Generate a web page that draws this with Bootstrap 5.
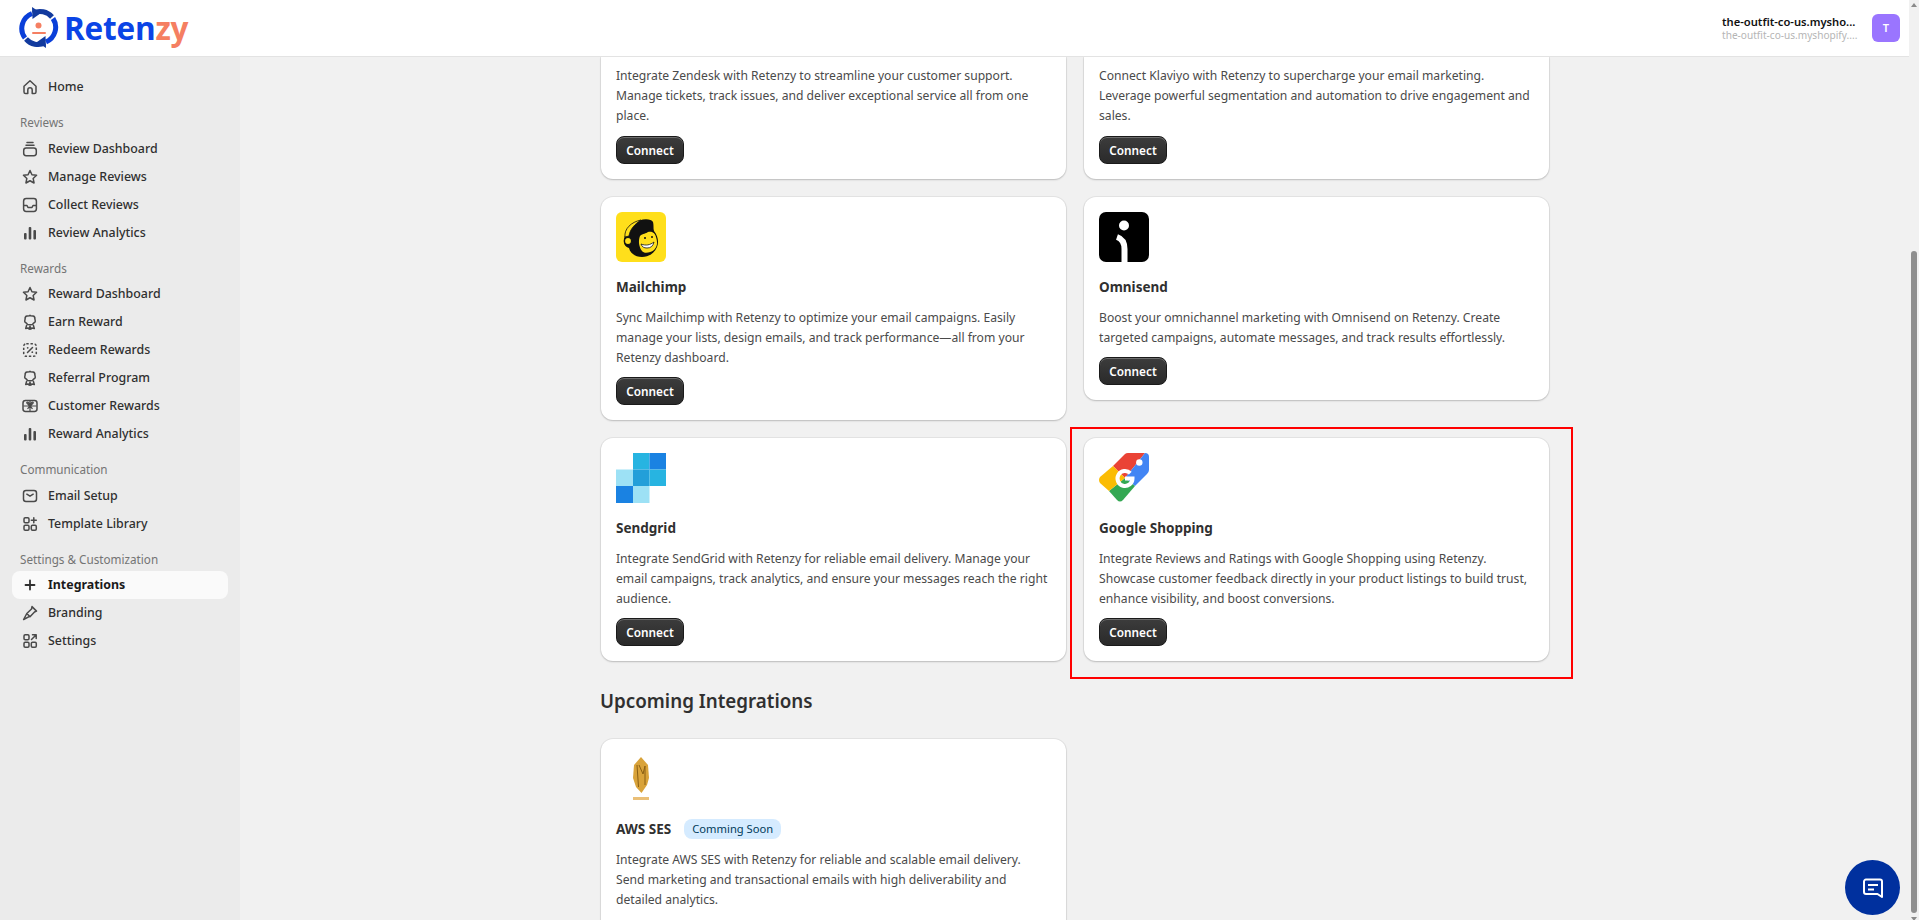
<!DOCTYPE html>
<html lang="en">
<head>
<meta charset="utf-8">
<title>Retenzy Integrations</title>
<link href="https://cdn.jsdelivr.net/npm/bootstrap@5.3.0/dist/css/bootstrap.min.css" rel="stylesheet">
<style>
html,body{height:100%;overflow:hidden;}
body{background:#f1f1f1;font-family:"Noto Sans","Open Sans",sans-serif;color:#303030;font-size:13px;line-height:20px;}
.app-shell{height:920px;}
.app-left{min-width:0;}
.app-body{min-height:0;}
.topbar{height:57px;flex:none;background:#fff;border-bottom:1px solid #e3e3e3;padding:0 9px 0 19px;}
.brand-name{font-family:"Open Sans",sans-serif;font-weight:700;font-size:31.5px;line-height:40px;color:#0b44e6;letter-spacing:-.2px;margin-left:5px;margin-top:-1px;}
.brand-name span{color:#f57f62;}
.shop-box{width:141px;margin-right:9px;}
.shop-name{font-size:11.2px;font-weight:600;color:#111;line-height:14px;white-space:nowrap;}
.shop-domain{font-size:10.1px;color:#b5b5b5;line-height:13px;white-space:nowrap;}
.avatar-box{width:28px;height:28px;border-radius:6px;background:#9a75ff;color:#fff;font-size:11px;font-weight:600;}
.side-panel{width:240px;background:#ebebeb;padding:16px 12px 0;flex:none;}
.side-label{font-size:11.7px;line-height:19px;color:#747474;margin-top:12px;padding-left:8px;height:21.5px;white-space:nowrap;}
.side-link{height:28px;padding-left:8px;gap:8px;color:#303030;font-size:12.4px;font-weight:500;border-radius:8px;text-decoration:none;}
.side-link svg{width:20px;height:20px;flex:none;}
.side-link.is-current{background:#fafafa;font-weight:700;color:#1a1a1a;}
.main-area{min-width:0;overflow:hidden;position:relative;}
.content-wrap{width:948px;margin-left:361px;}
.card-grid{display:grid;grid-template-columns:465px 465px;column-gap:18px;row-gap:18px;align-items:start;}
.int-card{border:0;border-radius:12px;background:#fff;padding:15px;box-shadow:0 0 0 1px rgba(0,0,0,.05),0 1px 2px rgba(0,0,0,.18);position:relative;}
.int-card.cut-top{border-top-left-radius:0;border-top-right-radius:0;padding-top:9px;}
.int-logo{width:50px;height:50px;display:block;flex:none;margin-bottom:15px;}
.int-title{font-size:13.5px;line-height:20px;font-weight:700;color:#303030;margin:0 0 11px;}
.int-text{font-size:12.15px;line-height:20px;color:#4a4a4a;margin:0 0 9px;}
.cut-top .int-text{margin-bottom:10px;}
.connect-btn{height:28px;width:68px;padding:0;font-size:11.8px;font-weight:600;line-height:26px;color:#fff;border-radius:8px;border:1px solid #1a1a1a;background:linear-gradient(#3c3c3c,#2a2a2a);box-shadow:inset 0 1px 0 rgba(255,255,255,.25);display:block;}
.soon-pill{background:#d5ebff;color:#003a5a;font-size:11.2px;font-weight:400;line-height:20px;border-radius:8px;padding:0 8px;margin-left:13px;}
.section-head{font-size:18.8px;line-height:28px;font-weight:600;color:#303030;margin:26px 0 24px -1px;}
.focus-frame{position:absolute;left:-14px;right:-24px;top:-11px;bottom:-18px;border:2px solid #f00;pointer-events:none;}
.scroll-col{width:10px;background:#f1f1f1;flex:none;}
.scroll-thumb{width:6px;margin:244px 0 0 2px;height:662px;background:#8f8f8f;border-radius:3px;}
.scroll-arrow{width:0;height:0;margin:3px auto 0;border-left:3px solid transparent;border-right:3px solid transparent;border-bottom:4px solid #8a8a8a;}
.scroll-arrow.down{border-bottom:0;border-top:4px solid #8a8a8a;margin-top:4px;}
.chat-fab{position:fixed;left:1845px;top:860px;width:55px;height:55px;border-radius:50%;background:#00309e;border:0;padding:0;}
</style>
</head>
<body>
<svg width="0" height="0" class="position-absolute">
<defs>
<g id="ic-home" fill="none" stroke="#4a4a4a" stroke-width="1.5" stroke-linejoin="round"><path d="M4 9.2 10 3.8l6 5.4V15a1.6 1.6 0 0 1-1.6 1.6H12.2V13a2.2 2.2 0 0 0-4.4 0v3.600H5.600A1.600 1.600 0 0 1 4 15z"/></g>
<g id="ic-stack" fill="none" stroke="#4a4a4a" stroke-width="1.5" stroke-linecap="round"><rect x="3.700" y="9" width="12.600" height="7.700" rx="2.400"/><path d="M6 6.200h8M7 3.600h6"/></g>
<g id="ic-star" fill="none" stroke="#4a4a4a" stroke-width="1.500" stroke-linejoin="round"><path d="M10 3.500l1.950 4.200 4.600.6-3.400 3.150.9 4.550L10 13.750 5.950 16l.9-4.550L3.450 8.300l4.600-.6z"/></g>
<g id="ic-inbox" fill="none" stroke="#4a4a4a" stroke-width="1.500" stroke-linejoin="round"><rect x="3.600" y="3.600" width="12.800" height="12.800" rx="2.600"/><path d="M3.600 10.500H7l1 2h4l1-2h3.400"/></g>
<g id="ic-bars" fill="#4a4a4a"><rect x="4" y="10" width="2.600" height="6.500" rx="1"/><rect x="8.700" y="4" width="2.600" height="12.500" rx="1"/><rect x="13.400" y="7" width="2.600" height="9.500" rx="1"/></g>
<g id="ic-award" fill="none" stroke="#4a4a4a" stroke-width="1.500" stroke-linejoin="round"><path d="M10 3.200c1 .9 1.800.7 3 .8 1.600.2 2 1.800 1.900 3 0 1 .9 1.700.1 3-.7 1-1.700 1-2.300 2.200-.8.700-1.800.6-2.700.6s-1.900.1-2.700-.6C6.700 11 5.700 11 5 10c-.8-1.300.1-2 .1-3-.1-1.200.3-2.800 1.900-3 1.200-.1 2 .1 3-.8z"/><path d="M6.800 12.800 5.700 16.500l2.300-.6 1.300 1.300.7-3 .7 3 1.300-1.300 2.300.6-1.100-3.700"/></g>
<g id="ic-redeem" fill="none" stroke="#4a4a4a" stroke-width="1.500"><rect x="3.700" y="3.700" width="12.600" height="12.600" rx="2.600" stroke-dasharray="2.400 1.800"/><path d="M12.500 7.500l-5 5" stroke-linecap="round"/><circle cx="7.700" cy="7.800" r=".9" fill="#4a4a4a" stroke="none"/><circle cx="12.300" cy="12.200" r=".9" fill="#4a4a4a" stroke="none"/></g>
<g id="ic-gift" fill="none" stroke="#4a4a4a" stroke-width="1.500"><rect x="3" y="4.500" width="14" height="11" rx="2.400"/><path d="M10 4.500v11M3.500 10h13M10 10 7 7.200c-1-.8.800-1.600 1.500-.6zM10 10l3-2.800c1-.8-.8-1.600-1.500-.6zM10 10l-2.500 2.800M10 10l2.500 2.800" stroke-width="1.200"/></g>
<g id="ic-mail" fill="none" stroke="#4a4a4a" stroke-width="1.500" stroke-linecap="round"><rect x="3.500" y="4.500" width="13" height="11" rx="2.500"/><path d="M6.800 8.200 10 10.200l3.200-2"/></g>
<g id="ic-grid-plus" fill="none" stroke="#4a4a4a" stroke-width="1.500" stroke-linecap="round"><rect x="4" y="3.700" width="5" height="5" rx="1.200"/><rect x="4" y="11.300" width="5" height="5" rx="1.200"/><rect x="11.300" y="11.300" width="5" height="5" rx="1.200"/><path d="M13.800 3.700v5M11.300 6.200h5"/></g>
<g id="ic-plus" stroke="#303030" stroke-width="1.800" stroke-linecap="round"><path d="M10 5.500v9M5.500 10h9"/></g>
<g id="ic-brush" fill="none" stroke="#4a4a4a" stroke-width="1.500" stroke-linejoin="round"><path d="M12 3.600l4.500 4.500-2 .9-4.500 4.700-3.200-3.200 4.700-4.500z"/><path d="M6.800 10.500 3.600 16.500l6-3.200"/></g>
<g id="ic-grid-arrow" fill="none" stroke="#4a4a4a" stroke-width="1.500" stroke-linecap="round" stroke-linejoin="round"><rect x="4" y="3.700" width="5" height="5" rx="1.200"/><rect x="4" y="11.300" width="5" height="5" rx="1.200"/><rect x="11.300" y="11.300" width="5" height="5" rx="1.200"/><path d="M11.500 8.500 16 4M12.500 3.700h3.700v3.700"/></g>
</defs>
</svg>

<div class="app-shell d-flex">
  <div class="app-left flex-grow-1 d-flex flex-column">
    <header class="topbar d-flex align-items-center justify-content-between">
      <div class="d-flex align-items-center">
        <svg width="40" height="42" viewBox="0 0 40 42" aria-hidden="true">
          <path d="M6 31A16 16 0 0 1 13 6.500" fill="none" stroke="#0a3fd9" stroke-width="5"/>
          <path d="M34 11.500A16 16 0 0 1 27 35" fill="none" stroke="#0a3fd9" stroke-width="5"/>
          <path d="M14 6A16 16 0 0 1 33 10" fill="none" stroke="#123a9e" stroke-width="5"/>
          <path d="M26 36A16 16 0 0 1 7 32" fill="none" stroke="#123a9e" stroke-width="5"/>
          <path d="M14 0l.5 12L23 6z" fill="#123a9e" transform="translate(-1 0)"/>
          <path d="M26 42l-.5-12L17 36z" fill="#123a9e" transform="translate(1 -1)"/>
          <circle cx="19.500" cy="18.500" r="3" fill="#f57f62"/>
          <rect x="13" y="25" width="14" height="2" rx="1" fill="#f57f62"/>
        </svg>
        <div class="brand-name">Reten<span>zy</span></div>
      </div>
      <div class="d-flex align-items-center">
        <div class="shop-box">
          <div class="shop-name">the-outfit-co-us.mysho...</div>
          <div class="shop-domain">the-outfit-co-us.myshopify....</div>
        </div>
        <div class="avatar-box d-flex align-items-center justify-content-center">T</div>
      </div>
    </header>

    <div class="app-body d-flex flex-grow-1">
      <nav class="side-panel">
        <a class="side-link d-flex align-items-center" href="#"><svg viewBox="0 0 20 20"><use href="#ic-home"/></svg>Home</a>
        <div class="side-label">Reviews</div>
        <a class="side-link d-flex align-items-center" href="#"><svg viewBox="0 0 20 20"><use href="#ic-stack"/></svg>Review Dashboard</a>
        <a class="side-link d-flex align-items-center" href="#"><svg viewBox="0 0 20 20"><use href="#ic-star"/></svg>Manage Reviews</a>
        <a class="side-link d-flex align-items-center" href="#"><svg viewBox="0 0 20 20"><use href="#ic-inbox"/></svg>Collect Reviews</a>
        <a class="side-link d-flex align-items-center" href="#"><svg viewBox="0 0 20 20"><use href="#ic-bars"/></svg>Review Analytics</a>
        <div class="side-label">Rewards</div>
        <a class="side-link d-flex align-items-center" href="#"><svg viewBox="0 0 20 20"><use href="#ic-star"/></svg>Reward Dashboard</a>
        <a class="side-link d-flex align-items-center" href="#"><svg viewBox="0 0 20 20"><use href="#ic-award"/></svg>Earn Reward</a>
        <a class="side-link d-flex align-items-center" href="#"><svg viewBox="0 0 20 20"><use href="#ic-redeem"/></svg>Redeem Rewards</a>
        <a class="side-link d-flex align-items-center" href="#"><svg viewBox="0 0 20 20"><use href="#ic-award"/></svg>Referral Program</a>
        <a class="side-link d-flex align-items-center" href="#"><svg viewBox="0 0 20 20"><use href="#ic-gift"/></svg>Customer Rewards</a>
        <a class="side-link d-flex align-items-center" href="#"><svg viewBox="0 0 20 20"><use href="#ic-bars"/></svg>Reward Analytics</a>
        <div class="side-label">Communication</div>
        <a class="side-link d-flex align-items-center" href="#"><svg viewBox="0 0 20 20"><use href="#ic-mail"/></svg>Email Setup</a>
        <a class="side-link d-flex align-items-center" href="#"><svg viewBox="0 0 20 20"><use href="#ic-grid-plus"/></svg>Template Library</a>
        <div class="side-label">Settings &amp; Customization</div>
        <a class="side-link is-current d-flex align-items-center" href="#"><svg viewBox="0 0 20 20"><use href="#ic-plus"/></svg>Integrations</a>
        <a class="side-link d-flex align-items-center" href="#"><svg viewBox="0 0 20 20"><use href="#ic-brush"/></svg>Branding</a>
        <a class="side-link d-flex align-items-center" href="#"><svg viewBox="0 0 20 20"><use href="#ic-grid-arrow"/></svg>Settings</a>
      </nav>

      <main class="main-area flex-grow-1">
        <div class="content-wrap">
          <div class="card-grid">
            <div class="card int-card cut-top">
              <p class="int-text">Integrate Zendesk with Retenzy to streamline your customer support. Manage tickets, track issues, and deliver exceptional service all from one place.</p>
              <button class="btn connect-btn">Connect</button>
            </div>
            <div class="card int-card cut-top">
              <p class="int-text">Connect Klaviyo with Retenzy to supercharge your email marketing. Leverage powerful segmentation and automation to drive engagement and sales.</p>
              <button class="btn connect-btn">Connect</button>
            </div>

            <div class="card int-card">
              <svg class="int-logo" viewBox="0 0 50 50" aria-hidden="true">
                <rect width="50" height="50" rx="6" fill="#ffdf1b"/>
                <path d="M17 12C24 6 35 6 37 10c1 4 0 6 1 9 4 5 5 11 3 16-3 7-9 10-15 10-7 0-12-4-13-9-4-1-6-5-5-9 1-5 4-11 9-15z" fill="#111"/>
                <path d="M9 25C8 17 15 10 25 8 19 12 14 17 13 24z" fill="#ffdf1b" stroke="#111" stroke-width=".8"/>
                <path d="M24 24c3-3 6-2 8-4 3-1 7 0 8 5 2 6 1 10-2 13-4 3-10 4-12 1-3-4-4-10-2-15z" fill="#ffdf1b"/>
                <path d="M25 32c5 2 9 1 13-2-1 4-3 6-7 6-3 0-5-1-6-4z" fill="#fff" stroke="#111" stroke-width=".8"/>
                <circle cx="29" cy="26" r="1" fill="#111"/><circle cx="36" cy="25" r="1" fill="#111"/>
                <circle cx="12" cy="29" r="3.500" fill="#ffdf1b" stroke="#111" stroke-width="1.200"/>
              </svg>
              <h3 class="int-title">Mailchimp</h3>
              <p class="int-text">Sync Mailchimp with Retenzy to optimize your email campaigns. Easily manage your lists, design emails, and track performance—all from your Retenzy dashboard.</p>
              <button class="btn connect-btn">Connect</button>
            </div>
            <div class="card int-card">
              <svg class="int-logo" viewBox="0 0 50 50" aria-hidden="true">
                <rect width="50" height="50" rx="7" fill="#000"/>
                <circle cx="25" cy="13.500" r="5" fill="#fff"/>
                <path d="M18 25c4.500 1.500 7.500 5 7.500 12v13" fill="none" stroke="#fff" stroke-width="6"/>
              </svg>
              <h3 class="int-title">Omnisend</h3>
              <p class="int-text">Boost your omnichannel marketing with Omnisend on Retenzy. Create targeted campaigns, automate messages, and track results effortlessly.</p>
              <button class="btn connect-btn">Connect</button>
            </div>

            <div class="card int-card">
              <svg class="int-logo" viewBox="0 0 50 50" aria-hidden="true">
                <rect x="17" y="0" width="16.500" height="16.500" fill="#27b4e1"/>
                <rect x="33.500" y="0" width="16.500" height="16.500" fill="#1a82e2"/>
                <rect x="0" y="16.500" width="17" height="16.500" fill="#9de1f5"/>
                <rect x="17" y="16.500" width="16.500" height="16.500" fill="#239fd9"/>
                <rect x="33.500" y="16.500" width="16.500" height="16.500" fill="#27b4e1"/>
                <rect x="0" y="33" width="17" height="17" fill="#1a82e2"/>
                <rect x="17" y="33" width="16.500" height="17" fill="#9de1f5"/>
              </svg>
              <h3 class="int-title">Sendgrid</h3>
              <p class="int-text">Integrate SendGrid with Retenzy for reliable email delivery. Manage your email campaigns, track analytics, and ensure your messages reach the right audience.</p>
              <button class="btn connect-btn">Connect</button>
            </div>
            <div class="position-relative">
              <div class="card int-card">
                <svg class="int-logo" viewBox="0 0 50 50" aria-hidden="true">
                  <path d="M14 13 26 1q1-1 3-1h17L26 25z" fill="#ea4335"/>
                  <path d="M46 0q4 0 4 4v13q0 2-2 4L36 33 26 25z" fill="#4285f4"/>
                  <path d="M36 33 24 47q-3 3-6 0l-8-9 16-13z" fill="#34a853"/>
                  <path d="M14 13 26 25 10 38l-9-8q-2-3 0-6z" fill="#fbbc04"/>
                  <circle cx="40.300" cy="9.500" r="3.200" fill="#fff"/>
                  <path d="M31.300 20.200A7.500 7.500 0 1 0 33.500 25.500H26" fill="none" stroke="#fff" stroke-width="4"/>
                </svg>
                <h3 class="int-title">Google Shopping</h3>
                <p class="int-text">Integrate Reviews and Ratings with Google Shopping using Retenzy. Showcase customer feedback directly in your product listings to build trust, enhance visibility, and boost conversions.</p>
                <button class="btn connect-btn">Connect</button>
              </div>
              <div class="focus-frame"></div>
            </div>
          </div>

          <h2 class="section-head">Upcoming Integrations</h2>
          <div class="card-grid">
            <div class="card int-card">
              <svg class="int-logo" viewBox="0 0 50 50" aria-hidden="true">
                <path d="M25 3l7 8 1 13-2 7-5.500 8-5.500-6-3-9 1-13z" fill="#d9a33a"/>
                <path d="M21 11l1.500 22M23 11l4 9 2-8M29 12v19" fill="none" stroke="#8a5f13" stroke-width="1"/>
                <path d="M17 43h16v3H17z" fill="#e3a94a" opacity=".75"/>
              </svg>
              <h3 class="int-title d-flex align-items-center">AWS SES <span class="badge soon-pill">Comming Soon</span></h3>
              <p class="int-text">Integrate AWS SES with Retenzy for reliable and scalable email delivery. Send marketing and transactional emails with high deliverability and detailed analytics.</p>
            </div>
          </div>
        </div>
      </main>
    </div>
  </div>
  <div class="scroll-col">
    <div class="scroll-arrow"></div>
    <div class="scroll-thumb"></div>
    <div class="scroll-arrow down"></div>
  </div>
</div>

<button class="chat-fab d-flex align-items-center justify-content-center" aria-label="Chat">
  <svg width="24" height="24" viewBox="0 0 24 24" aria-hidden="true">
    <path d="M5 3.500h14a2 2 0 0 1 2 2v15.500l-4.500-3H5a2 2 0 0 1-2-2V5.500a2 2 0 0 1 2-2z" fill="none" stroke="#fff" stroke-width="2" stroke-linejoin="round"/>
    <path d="M7 9h10M7 13.500h6" stroke="#fff" stroke-width="2"/>
  </svg>
</button>
</body>
</html>
